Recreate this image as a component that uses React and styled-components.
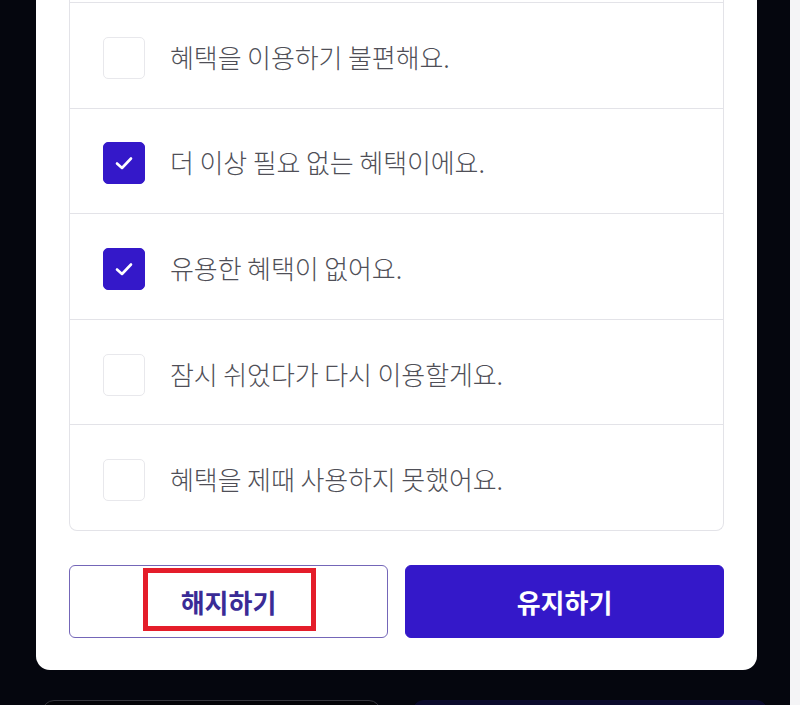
import React from "react";
import styled, { createGlobalStyle } from "styled-components";

const Global = createGlobalStyle`
  html, body { margin: 0; padding: 0; background: #05060e; overflow: hidden; }
  body { font-family: "Noto Sans CJK KR", "Noto Sans", sans-serif; }
`;

const Screen = styled.div`
  display: flex;
  width: 800px;
  height: 705px;
  overflow: hidden;
`;

const Stage = styled.div`
  width: 790px;
  background: #05060e;
  display: flex;
  flex-direction: column;
  padding-left: 36px;
  box-sizing: border-box;
`;

const EdgeStrip = styled.div`
  flex: 1;
  background: #f4f4f6;
`;

const Card = styled.div`
  width: 721px;
  margin-top: -20px;
  background: #ffffff;
  border-radius: 0 0 14px 14px;
  padding: 0 33px 32px;
  box-sizing: border-box;
  display: flex;
  flex-direction: column;
  gap: 34px;
`;

const List = styled.div`
  border: 1px solid #e3e3e8;
  border-top: none;
  border-radius: 0 0 8px 8px;
  padding-top: 22px;
  display: flex;
  flex-direction: column;
`;

const Row = styled.label`
  height: 105.6px;
  box-sizing: border-box;
  border-top: 1px solid #e3e3e8;
  display: flex;
  align-items: center;
  padding: 5px 0 0 33px;
  gap: 25px;
`;

const Box = styled.span`
  width: 42px;
  height: 42px;
  box-sizing: border-box;
  border-radius: 5px;
  flex-shrink: 0;
  display: flex;
  align-items: center;
  justify-content: center;
  background: ${(p) => (p.$checked ? "#3418c9" : "#ffffff")};
  border: 1.5px solid ${(p) => (p.$checked ? "#3418c9" : "#e8e8ec")};
`;

const Label = styled.span`
  font-size: 26px;
  font-weight: 300;
  color: #4f4f57;
  letter-spacing: -0.1px;
  margin-top: -3px;
`;

const Actions = styled.div`
  display: grid;
  grid-template-columns: 1fr 1fr;
  gap: 17px;
`;

const Button = styled.button`
  position: relative;
  height: 73px;
  border-radius: 6px;
  font-family: "Noto Sans CJK KR", "Noto Sans", sans-serif;
  font-size: 26px;
  font-weight: 700;
  cursor: pointer;
  border: 1px solid ${(p) => (p.$primary ? "#3418c9" : "#7466b8")};
  background: ${(p) => (p.$primary ? "#3418c9" : "#ffffff")};
  color: ${(p) => (p.$primary ? "#ffffff" : "#3a2b96")};
  padding: 0;
`;

const Highlight = styled.span`
  position: absolute;
  left: 73px;
  top: 2px;
  width: 173px;
  height: 63px;
  box-sizing: border-box;
  border: 5px solid #e41d2a;
  pointer-events: none;
`;

const Behind = styled.div`
  display: grid;
  grid-template-columns: 339px 356px;
  gap: 31px;
  margin-top: 30px;
  margin-left: 6px;
`;

const GhostButton = styled.div`
  height: 40px;
  border-radius: 12px;
  border: 1px solid ${(p) => (p.$dark ? "#35353d" : "#0c0b2e")};
  background: ${(p) => (p.$dark ? "#050509" : "#0b0a2c")};
`;

const Check = () => (
  <svg width="20" height="16" viewBox="0 0 20 16" fill="none">
    <polyline
      points="3,8.5 8,13 17,3.5"
      stroke="#ffffff"
      strokeWidth="2.6"
      strokeLinecap="round"
      strokeLinejoin="round"
    />
  </svg>
);

const reasons = [
  { text: "혜택을 이용하기 불편해요.", checked: false },
  { text: "더 이상 필요 없는 혜택이에요.", checked: true },
  { text: "유용한 혜택이 없어요.", checked: true },
  { text: "잠시 쉬었다가 다시 이용할게요.", checked: false },
  { text: "혜택을 제때 사용하지 못했어요.", checked: false },
];

export default function App() {
  return (
    <>
      <Global />
      <Screen>
        <Stage>
          <Card>
            <List>
              {reasons.map((r, i) => (
                <Row key={i}>
                  <Box $checked={r.checked}>{r.checked && <Check />}</Box>
                  <Label>{r.text}</Label>
                </Row>
              ))}
            </List>
            <Actions>
              <Button>
                해지하기
                <Highlight />
              </Button>
              <Button $primary>유지하기</Button>
            </Actions>
          </Card>
          <Behind>
            <GhostButton $dark />
            <GhostButton />
          </Behind>
        </Stage>
        <EdgeStrip />
      </Screen>
    </>
  );
}
